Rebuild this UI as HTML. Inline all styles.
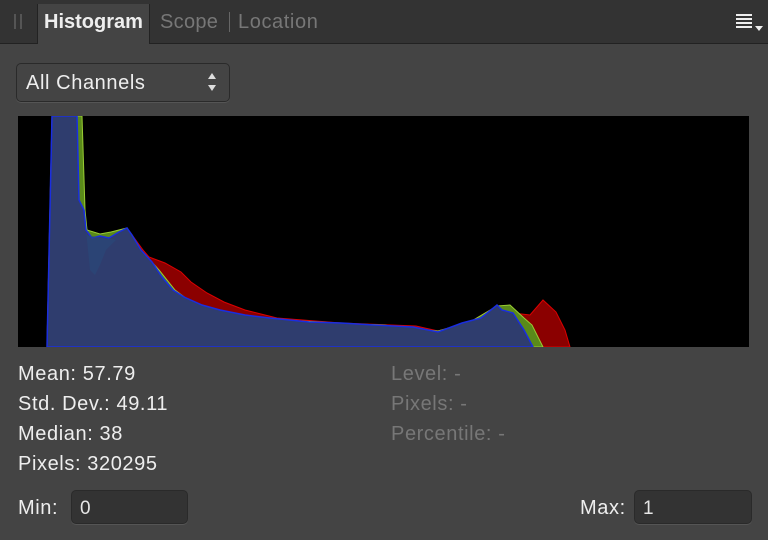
<!DOCTYPE html>
<html><head><style>
*{margin:0;padding:0;box-sizing:border-box}
body{width:768px;height:540px;background:#444;font-family:"Liberation Sans",sans-serif;color:#e6e6e6;position:relative;overflow:hidden}
.bar{position:absolute;left:0;top:0;width:768px;height:44px;background:#333;border-bottom:1px solid #222}
.tab{position:absolute;top:4px;height:40px;background:#444;left:37px;width:113px;border-left:1px solid #222;border-right:1px solid #222}
.t{position:absolute;font-size:20px;top:11px;letter-spacing:0.3px}
.lbl{position:absolute;font-size:20px;color:#eee;letter-spacing:0.6px}
.dim{color:#777}
.sel{position:absolute;left:16px;top:63px;width:214px;height:39px;background:#444;border:1px solid #2a2a2a;border-radius:5px;box-shadow:0 1px 0 #555}
.inp{position:absolute;height:34px;background:#333;border:1px solid #2a2a2a;border-radius:5px;box-shadow:0 1px 0 #555;font-size:19px;padding:7px 0 0 8px}
</style></head><body>
<div class="bar"></div>
<div style="position:absolute;left:14px;top:14px;width:2px;height:15px;background:#555"></div>
<div style="position:absolute;left:20px;top:14px;width:2px;height:15px;background:#555"></div>
<div class="tab"></div>
<div class="t" style="left:44px;color:#eee;font-weight:bold;letter-spacing:0">Histogram</div>
<div class="t dim" style="left:160px">Scope</div>
<div style="position:absolute;left:229px;top:12px;width:1px;height:20px;background:#666"></div>
<div class="t dim" style="left:238px;letter-spacing:0.6px">Location</div>
<div style="position:absolute;left:736px;top:14px;width:16px;height:2px;background:#eee;box-shadow:0 4px 0 #eee,0 8px 0 #eee,0 12px 0 #eee"></div>
<div style="position:absolute;left:755px;top:26px;width:0;height:0;border-left:4px solid transparent;border-right:4px solid transparent;border-top:5px solid #eee"></div>
<div class="sel"></div>
<div class="lbl" style="left:26px;top:72px">All Channels</div>
<div style="position:absolute;left:208px;top:73px;border-left:4px solid transparent;border-right:4px solid transparent;border-bottom:6px solid #ddd"></div>
<div style="position:absolute;left:208px;top:85px;border-left:4px solid transparent;border-right:4px solid transparent;border-top:6px solid #ddd"></div>
<svg style="position:absolute;left:18px;top:116px" width="731" height="231" viewBox="18 116 731 231">
<rect x="18" y="116" width="731" height="231" fill="#000"/>
<polygon fill="#8b0000" stroke="#d00" stroke-width="1" points="47,347 52,116 81,116 84,207 86,230 106,236 127,228 143,250 149,257 165,263 181,272 191,282 207,293 224,302 245,310 277,318 341,323 416,326 438,331 470,322 497,306 513,313 530,315 543,300 556,312 565,330 570,347"/>
<polygon fill="#5a8a1a" stroke="#9c3" stroke-width="1" points="47,347 52,116 82,116 85,210 87,230 100,234 111,232 127,228 141,250 159,270 175,290 191,302 213,312 245,318 277,320 320,322 352,324 384,325 413,329 438,331 470,322 497,306 510,305 524,318 532,325 543,347"/>
<polygon fill="#2f3d6e" stroke="#1a2ee0" stroke-width="1.5" points="47,347 52,116 77,116 79,200 84,210 86,230 92,238 100,236 109,238 119,232 127,228 132,235 141,250 152,262 162,277 173,290 184,297 202,305 220,310 245,315 270,318 309,322 341,323 374,325 413,327 438,332 462,323 481,318 497,305 502,310 513,313 524,330 533,347"/>
<polygon fill="#2a4a7a" opacity="0.6" points="86,230 90,270 95,275 100,265 106,250 116,240 86,235"/>
</svg>
<div class="lbl" style="left:18px;top:363px">Mean: 57.79</div>
<div class="lbl" style="left:18px;top:393px">Std. Dev.: 49.11</div>
<div class="lbl" style="left:18px;top:423px">Median: 38</div>
<div class="lbl" style="left:18px;top:453px">Pixels: 320295</div>
<div class="lbl dim" style="left:391px;top:363px">Level: -</div>
<div class="lbl dim" style="left:391px;top:393px">Pixels: -</div>
<div class="lbl dim" style="left:391px;top:423px">Percentile: -</div>
<div class="lbl" style="left:18px;top:497px">Min:</div>
<div class="inp" style="left:71px;top:490px;width:117px">0</div>
<div class="lbl" style="left:580px;top:497px">Max:</div>
<div class="inp" style="left:634px;top:490px;width:118px">1</div>
</body></html>
